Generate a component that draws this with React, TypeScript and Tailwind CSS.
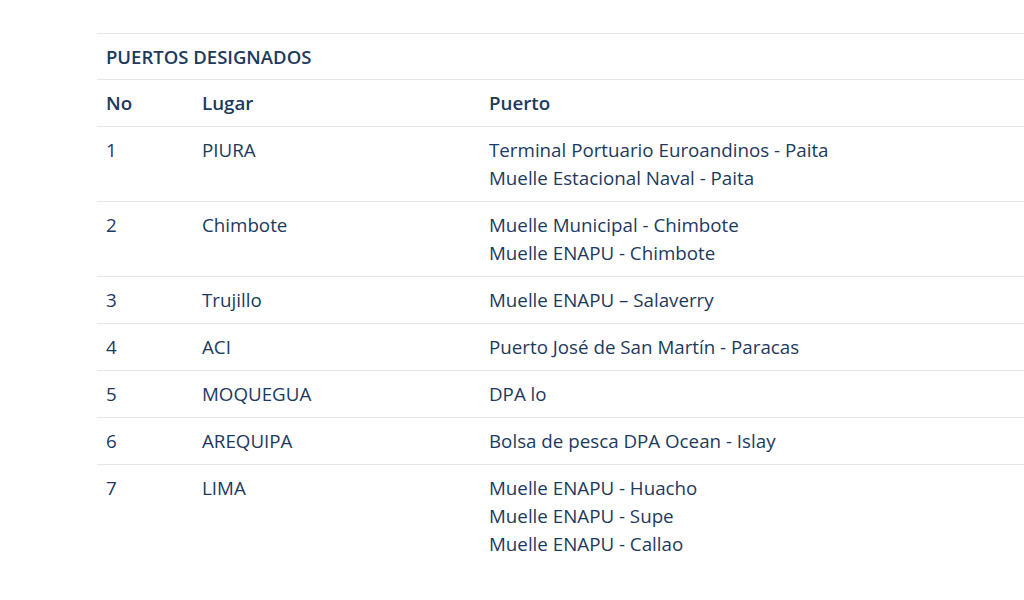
import React from 'react';

const rows: { no: string; lugar: string; puertos: string[] }[] = [
  { no: '1', lugar: 'PIURA', puertos: ['Terminal Portuario Euroandinos - Paita', 'Muelle Estacional Naval - Paita'] },
  { no: '2', lugar: 'Chimbote', puertos: ['Muelle Municipal - Chimbote', 'Muelle ENAPU - Chimbote'] },
  { no: '3', lugar: 'Trujillo', puertos: ['Muelle ENAPU – Salaverry'] },
  { no: '4', lugar: 'ACI', puertos: ['Puerto José de San Martín - Paracas'] },
  { no: '5', lugar: 'MOQUEGUA', puertos: ['DPA lo'] },
  { no: '6', lugar: 'AREQUIPA', puertos: ['Bolsa de pesca DPA Ocean - Islay'] },
  { no: '7', lugar: 'LIMA', puertos: ['Muelle ENAPU - Huacho', 'Muelle ENAPU - Supe', 'Muelle ENAPU - Callao'] },
];

const App: React.FC = () => {
  return (
    <div
      className="w-[1024px] h-[600px] overflow-hidden bg-white pt-[33px] pl-[97px] text-[#1d3a5e] text-[18.75px] leading-[28px]"
      style={{ fontFamily: '"Open Sans", "Liberation Sans", sans-serif' }}
    >
      <table className="w-[1000px] border-collapse">
        <thead>
          <tr className="border-t border-[#e3e6ea]">
            <th colSpan={3} className="text-left font-semibold text-[18.5px] px-[9px] pt-[9px] pb-[8px]">
              PUERTOS DESIGNADOS
            </th>
          </tr>
          <tr className="border-t border-[#e3e6ea]">
            <th className="w-[96px] text-left font-semibold px-[9px] py-[9px]">No</th>
            <th className="w-[287px] text-left font-semibold px-[9px] py-[9px]">Lugar</th>
            <th className="text-left font-semibold px-[9px] py-[9px]">Puerto</th>
          </tr>
        </thead>
        <tbody>
          {rows.map((r) => (
            <tr key={r.no} className="border-t border-[#e3e6ea] align-top">
              <td className="px-[9px] py-[9px]">{r.no}</td>
              <td className="px-[9px] py-[9px]">{r.lugar}</td>
              <td className="px-[9px] py-[9px]">
                {r.puertos.map((p) => (
                  <div key={p}>{p}</div>
                ))}
              </td>
            </tr>
          ))}
        </tbody>
      </table>
    </div>
  );
};

export default App;
